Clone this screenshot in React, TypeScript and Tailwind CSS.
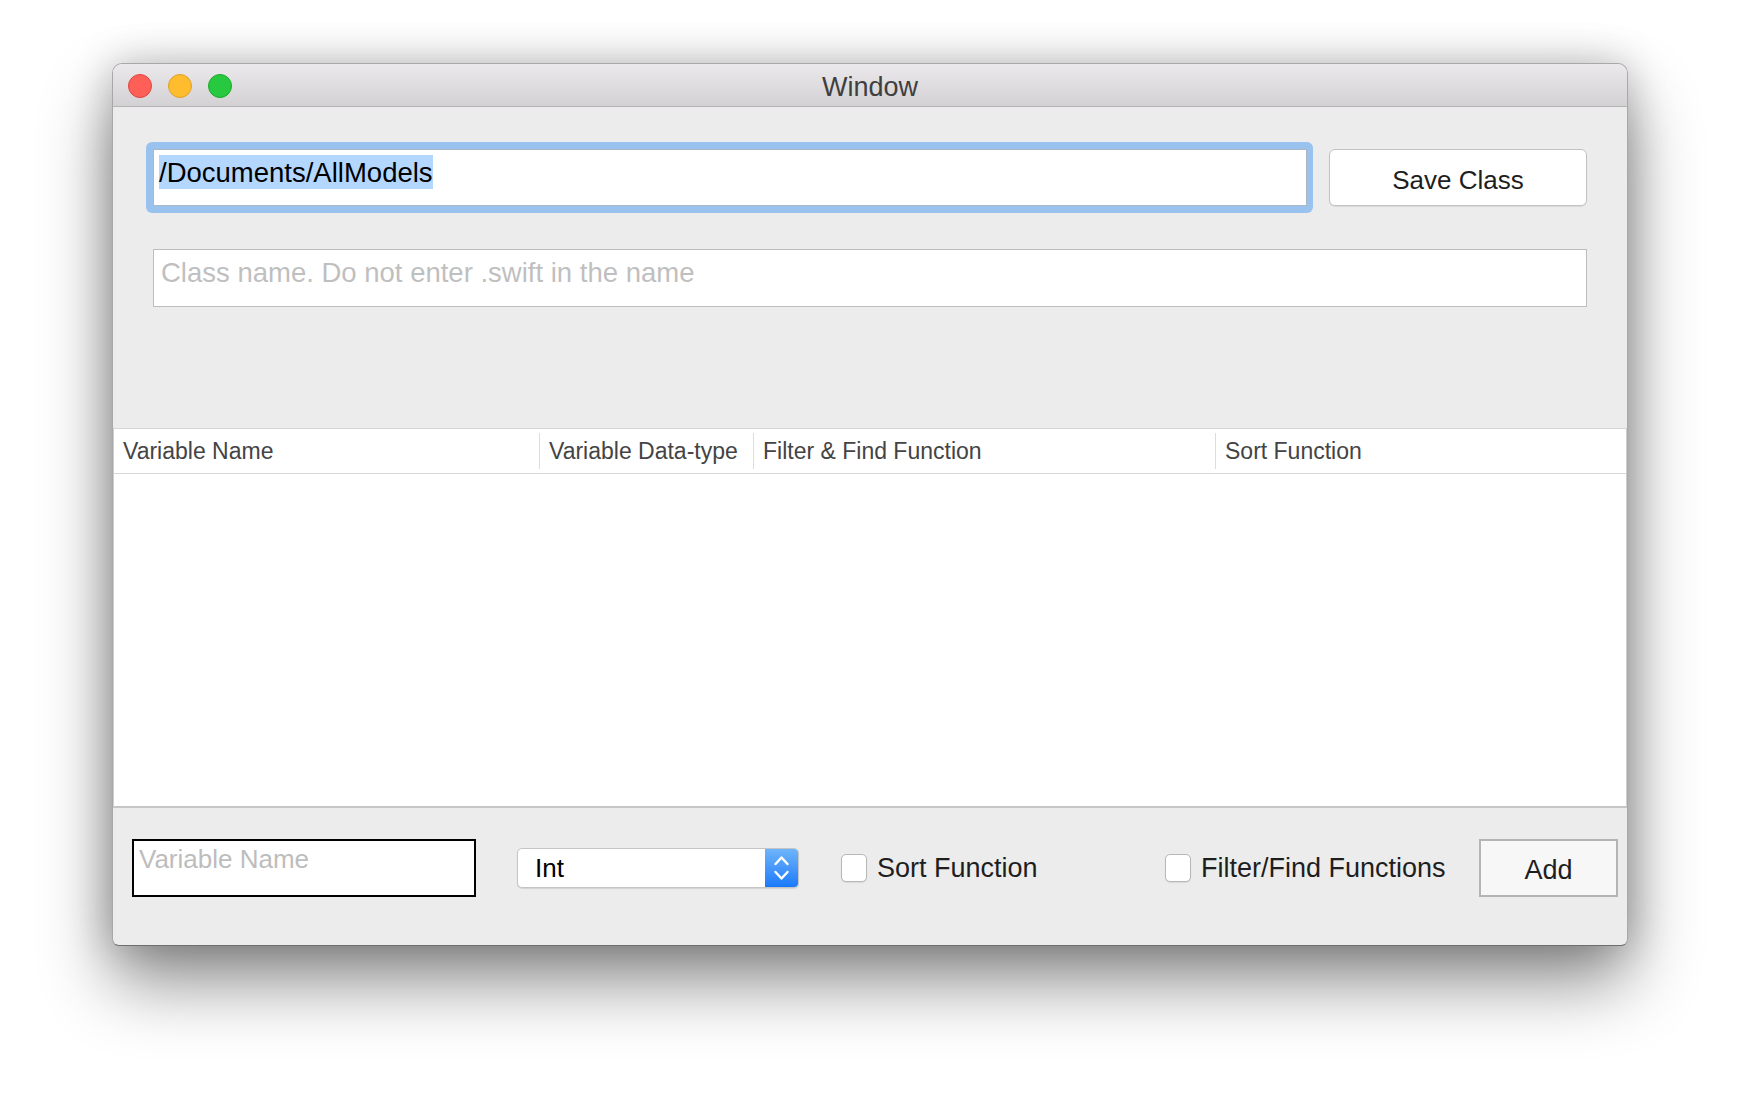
import React from 'react';

const font = { fontFamily: '"Liberation Sans", Arial, sans-serif' };

function TrafficLights() {
    return (
        <div className="ml-[15px] flex items-center gap-[16px] pt-[1px]">
            <span className="h-[24px] w-[24px] rounded-full border border-[#e0443e] bg-[#fe5f57]" />
            <span className="h-[24px] w-[24px] rounded-full border border-[#dea123] bg-[#febc2e]" />
            <span className="h-[24px] w-[24px] rounded-full border border-[#1aab29] bg-[#28c840]" />
        </div>
    );
}

function Stepper() {
    return (
        <div className="flex h-full w-[33px] items-center justify-center bg-gradient-to-b from-[#6eb4fb] to-[#1879fa]">
            <svg width="33" height="40" viewBox="0 0 33 40" fill="none">
                <path d="M10.5 16 L16.5 9.5 L22.5 16" stroke="white" strokeWidth="2.4" strokeLinecap="round" strokeLinejoin="round" />
                <path d="M10.5 24 L16.5 30.5 L22.5 24" stroke="white" strokeWidth="2.4" strokeLinecap="round" strokeLinejoin="round" />
            </svg>
        </div>
    );
}

function Checkbox({ label, width }: { label: string; width: string }) {
    return (
        <div className={`flex items-center ${width}`}>
            <span className="h-[28px] w-[26px] rounded-[5px] border border-[#b7b7b7] bg-white shadow-[0_1px_1px_rgba(0,0,0,0.08)]" />
            <span className="ml-[10px] text-[27px] leading-none text-[#1e1e1e]">{label}</span>
        </div>
    );
}

export default function App() {
    const columns = [
        { name: 'Variable Name', w: 'w-[425px]' },
        { name: 'Variable Data-type', w: 'w-[213px]' },
        { name: 'Filter & Find Function', w: 'w-[461px]' },
        { name: 'Sort Function', w: 'flex-1' },
    ];

    return (
        <div className="min-h-[1106px] w-[1740px] bg-white pl-[112px] pt-[63px]" style={font}>
            <div className="flex h-[883px] w-[1516px] flex-col overflow-hidden rounded-t-[10px] rounded-b-[7px] border border-[#a8a8a8] border-b-[#6e6e6e] bg-[#ececec] shadow-[0_36px_70px_rgba(0,0,0,0.45),0_0_40px_rgba(0,0,0,0.22)]">
                {/* Title bar */}
                <div className="grid h-[43px] grid-cols-[1fr_auto_1fr] items-center border-b border-[#b6b4b6] bg-gradient-to-b from-[#ebe9eb] to-[#d3d1d3]">
                    <TrafficLights />
                    <div className="pt-[5px] text-[27px] leading-none text-[#3f3f3f]">Window</div>
                    <div />
                </div>

                {/* Path + Save */}
                <div className="mt-[35px] flex items-center gap-[16px] pl-[33px] pr-[40px]">
                    <div className="h-[71px] flex-1 rounded-[6px] bg-[#99c2ef] py-[7px] pl-[7px] pr-[6px]">
                        <div className="h-full border border-[#a9b7c7] bg-white pl-[5px] pt-[5px]">
                            <span className="inline-block bg-[#b4d7ff] pt-[2px] text-[27.5px] leading-[32px] text-black">/Documents/AllModels</span>
                        </div>
                    </div>
                    <button className="h-[57px] w-[258px] rounded-[6px] border border-[#c3c3c3] bg-white pt-[4px] text-[26px] leading-none text-[#1e1e1e] shadow-[0_1px_1px_rgba(0,0,0,0.08)]">
                        Save Class
                    </button>
                </div>

                {/* Class name */}
                <div className="mx-[40px] mt-[36px] h-[58px] border border-[#bdbdbd] bg-white pl-[7px] pt-[7px] text-[27.5px] leading-[31px] text-[#bfbfbf]">
                    Class name. Do not enter .swift in the name
                </div>

                {/* Table */}
                <div className="mt-[121px] flex h-[380px] flex-col border-x border-b-2 border-x-[#cfcfcf] border-b-[#c6c6c6] bg-white">
                    <div className="flex h-[46px] items-center border-y border-[#d6d6d6]">
                        {columns.map((c, i) => (
                            <React.Fragment key={c.name}>
                                {i > 0 && <span className="h-[36px] w-px bg-[#dcdcdc]" />}
                                <div className={`${c.w} pl-[9px] text-[23px] leading-none text-[#444]`}>{c.name}</div>
                            </React.Fragment>
                        ))}
                    </div>
                    <div className="flex-1" />
                </div>

                {/* Bottom bar */}
                <div className="mt-[31px] flex h-[58px] items-center pl-[19px]">
                    <div className="h-[58px] w-[344px] border-2 border-black bg-white pl-[5px] pt-[3px] text-[26px] leading-[30px] text-[#bdbdbd]">
                        Variable Name
                    </div>
                    <div className="ml-[41px] flex h-[40px] w-[282px] overflow-hidden rounded-[5px] border border-[#c4c4c4] bg-white shadow-[0_1px_1px_rgba(0,0,0,0.1)]">
                        <div className="flex flex-1 items-center pl-[17px] text-[26px] leading-none text-black">Int</div>
                        <Stepper />
                    </div>
                    <div className="ml-[42px] flex">
                        <Checkbox label="Sort Function" width="w-[324px]" />
                        <Checkbox label="Filter/Find Functions" width="w-[314px]" />
                    </div>
                    <button className="h-[58px] w-[139px] border-2 border-[#b4b4b4] bg-[#f7f7f7] pt-[4px] text-[27px] leading-none text-[#1e1e1e]">
                        Add
                    </button>
                </div>
            </div>
        </div>
    );
}
